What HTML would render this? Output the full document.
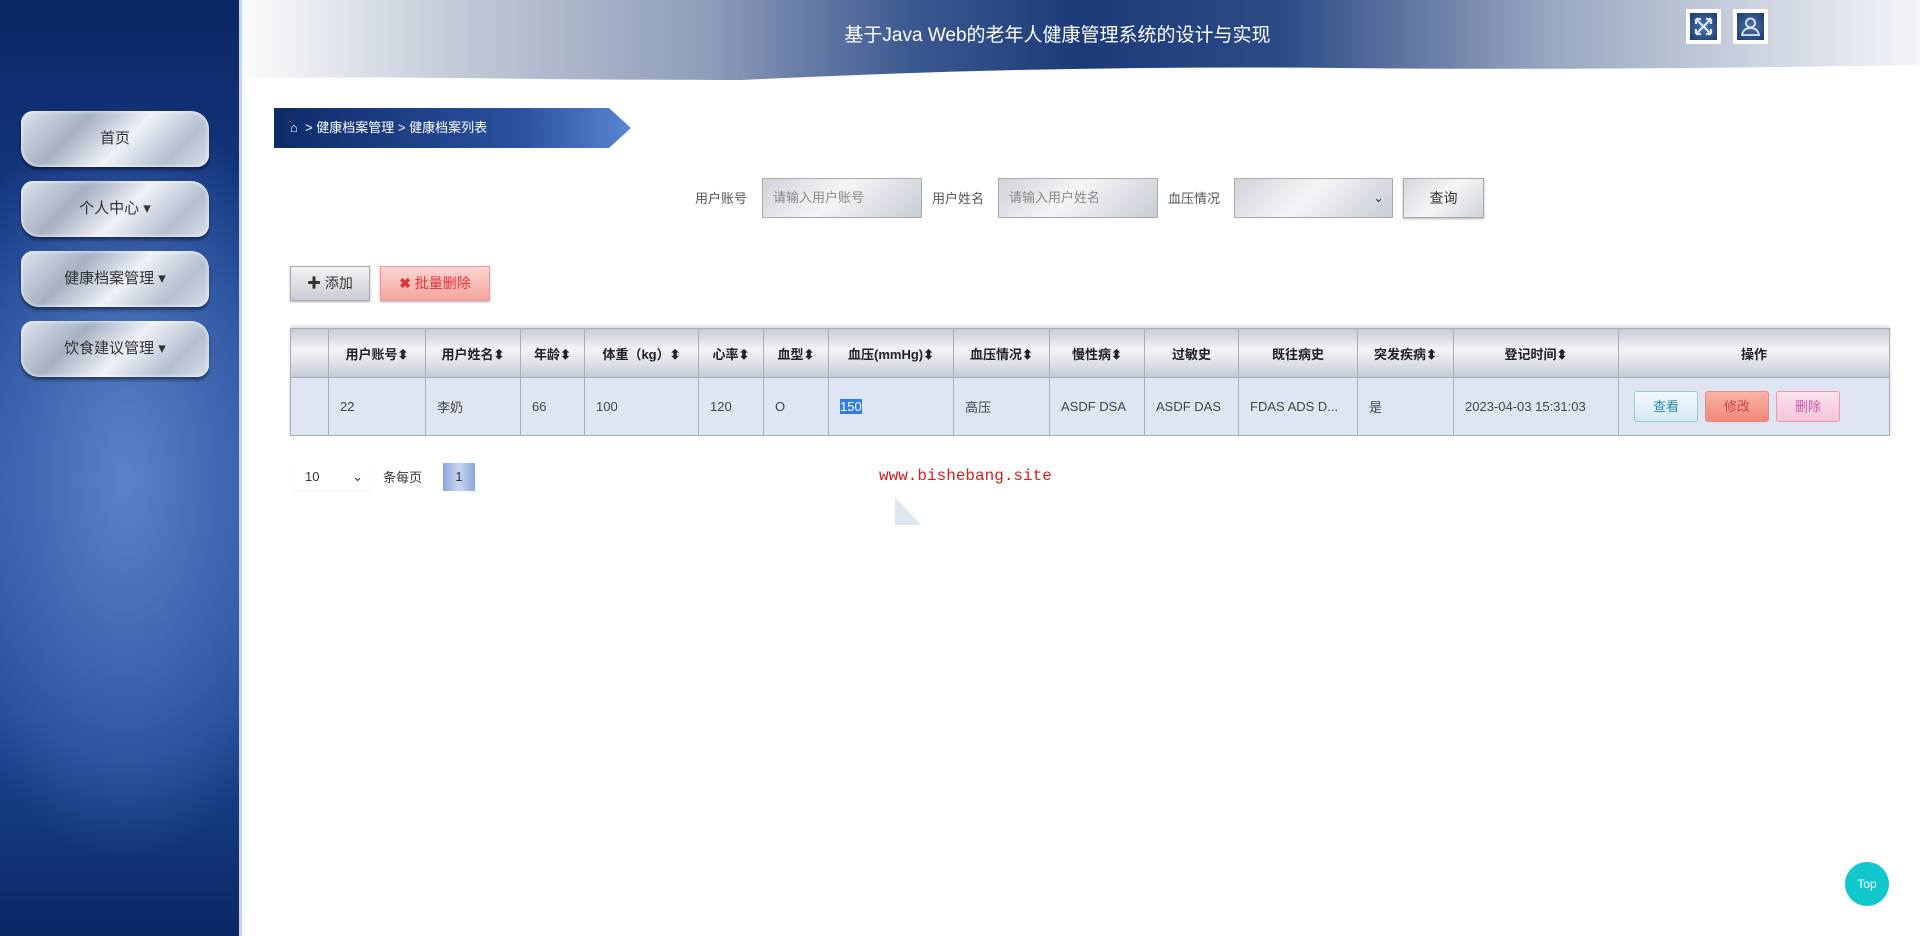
<!DOCTYPE html>
<html><head><meta charset="utf-8"><style>
*{box-sizing:border-box;margin:0;padding:0}
body{width:1920px;height:936px;overflow:hidden;background:#fff;font-family:"Liberation Sans","Noto Sans CJK SC",sans-serif;position:relative;font-size:14px;color:#333}
.side{position:absolute;left:0;top:0;width:242px;height:936px;background:radial-gradient(ellipse 200px 380px at 125px 480px,#5b82c9 0%,#4169b2 45%,rgba(40,80,160,0) 100%),linear-gradient(#0c2664 0%,#163c88 28%,#2f5aa8 52%,#1d4590 78%,#0a2766 100%);border-right:3px solid #c8d4ee}
.nav{position:absolute;left:21px;width:188px;height:56px;border-radius:12px 18px 12px 18px;background:linear-gradient(135deg,#dde3ec 0%,#a7b1c3 30%,#eef1f6 55%,#b4bfd0 80%,#d8dfe9 100%);box-shadow:0 3px 3px rgba(0,0,0,.45),inset 0 0 4px #fff;text-align:center;line-height:56px;font-size:15px;color:#333}
.hdr{position:absolute;left:242px;top:0;width:1678px;height:85px}
.title{position:absolute;left:0;width:1920px;top:20px;text-align:center;padding-left:195px;color:#fff;font-size:19px}
.ic{position:absolute;top:9px;width:35px;height:35px;background:#fff;padding:4px}
.ic div{width:100%;height:100%;background:radial-gradient(#4a73ad,#1b3a6e)}
.ic svg{display:block}
.bc{position:absolute;left:274px;top:108px;height:40px;width:357px;background:linear-gradient(90deg,#0e2b68,#2a52a0 70%,#5a86d0);clip-path:polygon(0 0,335px 0,100% 50%,335px 100%,0 100%);color:#fff;font-size:13px;line-height:40px;padding-left:16px}
.lbl{position:absolute;top:188px;font-size:13px;color:#555}
.inp{position:absolute;top:178px;height:40px;border:1px solid #aaa;background:linear-gradient(135deg,#d0d3da,#f4f5f8 45%,#c8ccd4);font-size:13px;color:#888;line-height:38px;padding-left:10px}
.btn{position:absolute;border:1px solid #aaa;text-align:center;font-size:14px;box-shadow:0 1px 2px rgba(0,0,0,.3)}
table{position:absolute;left:290px;top:328px;border-collapse:collapse;table-layout:fixed;width:1599px;box-shadow:0 -2px 3px rgba(0,0,0,.15)}
td,th{border:1px solid #a8aeb8;font-size:13px;white-space:nowrap;overflow:hidden}
th{height:49px;background:linear-gradient(#c7ccd6,#f2f3f6 40%,#dfe2e8 70%,#c4c9d3);font-weight:bold;color:#222}
td{height:58px;background:#dfe5f2;padding-left:11px;color:#444}
.ob{display:inline-block;width:64px;height:31px;line-height:29px;text-align:center;border-radius:3px;margin-right:7px;font-size:13px}
</style></head><body>
<div class="side">
<div class="nav" style="top:111px">首页</div>
<div class="nav" style="top:181px">个人中心 ▾</div>
<div class="nav" style="top:251px">健康档案管理 ▾</div>
<div class="nav" style="top:321px">饮食建议管理 ▾</div>
</div>
<svg class="hdr" width="1678" height="85" viewBox="0 0 1678 85"><defs><linearGradient id="g" x1="0" x2="1"><stop offset="0" stop-color="#fbfcfd"/><stop offset=".12" stop-color="#c6cdd9"/><stop offset=".28" stop-color="#8e9cb9"/><stop offset=".4" stop-color="#3a5890"/><stop offset=".5" stop-color="#1c3a78"/><stop offset=".62" stop-color="#2c4b86"/><stop offset=".78" stop-color="#9aa7c1"/><stop offset="1" stop-color="#f4f6f9"/></linearGradient></defs><path d="M0 0H1678V65C1500 68 1300 70 1100 68C900 66 700 70 500 80C300 80 150 76 0 78Z" fill="url(#g)"/></svg>
<div class="title">基于Java Web的老年人健康管理系统的设计与实现</div>
<div class="ic" style="left:1686px"><div><svg width="27" height="27" viewBox="0 0 27 27" fill="none" stroke="#dfe8f5" stroke-width="2.2"><path d="M6 6L21 21M21 6L6 21M6 6h5M6 6v5M21 6h-5M21 6v5M6 21h5M6 21v-5M21 21h-5M21 21v-5"/></svg></div></div>
<div class="ic" style="left:1733px"><div><svg width="27" height="27" viewBox="0 0 27 27" fill="none" stroke="#dfe8f5" stroke-width="1.8"><circle cx="13.5" cy="10" r="4.5"/><path d="M5 22c1-5 4-7 8.5-7s7.5 2 8.5 7z"/></svg></div></div>
<div class="bc">⌂ &nbsp;&gt; 健康档案管理 &gt; 健康档案列表</div>
<div class="lbl" style="left:695px">用户账号</div>
<div class="inp" style="left:762px;width:160px">请输入用户账号</div>
<div class="lbl" style="left:932px">用户姓名</div>
<div class="inp" style="left:998px;width:160px">请输入用户姓名</div>
<div class="lbl" style="left:1168px">血压情况</div>
<div class="inp" style="left:1234px;width:159px;text-align:right;padding-right:8px;color:#333">⌄</div>
<div class="btn" style="left:1403px;top:178px;width:81px;height:40px;line-height:38px;background:linear-gradient(135deg,#d5d8de,#f5f6f8 50%,#cfd3da)">查询</div>
<div class="btn" style="left:290px;top:266px;width:80px;height:35px;line-height:33px;background:linear-gradient(#f2f3f5,#c9cdd4)"><b>✚</b> 添加</div>
<div class="btn" style="left:380px;top:266px;width:110px;height:35px;line-height:33px;background:linear-gradient(#fcd6d2,#f3a59e);color:#d33;border-color:#e99"><b>✖</b> 批量删除</div>
<table><colgroup><col style="width:38px"><col style="width:97px"><col style="width:95px"><col style="width:64px"><col style="width:114px"><col style="width:65px"><col style="width:65px"><col style="width:125px"><col style="width:96px"><col style="width:95px"><col style="width:94px"><col style="width:119px"><col style="width:96px"><col style="width:165px"><col style="width:271px"></colgroup>
<tr><th></th><th>用户账号⬍</th><th>用户姓名⬍</th><th>年龄⬍</th><th>体重（kg）⬍</th><th>心率⬍</th><th>血型⬍</th><th>血压(mmHg)⬍</th><th>血压情况⬍</th><th>慢性病⬍</th><th>过敏史</th><th>既往病史</th><th>突发疾病⬍</th><th>登记时间⬍</th><th>操作</th></tr>
<tr><td></td><td>22</td><td>李奶</td><td>66</td><td>100</td><td>120</td><td>O</td><td><span style="background:#2f7fe0;color:#fff">150</span></td><td>高压</td><td>ASDF DSA</td><td>ASDF DAS</td><td>FDAS ADS D...</td><td>是</td><td>2023-04-03 15:31:03</td><td style="padding-left:15px"><span class="ob" style="background:linear-gradient(#f4f9fc,#d6eaf4);border:1px solid #9cc;color:#2a8aa8">查看</span><span class="ob" style="background:linear-gradient(#f9b3a8,#f08878);border:1px solid #e88;color:#c44">修改</span><span class="ob" style="background:linear-gradient(#fbe4ee,#f4c4d8);border:1px solid #e9a;color:#c5a">删除</span></td></tr>
</table>
<div style="position:absolute;left:291px;top:463px;width:80px;height:27px;font-size:13px;line-height:27px;padding-left:14px;box-shadow:0 1px 2px #eee">10 <span style="position:absolute;right:8px">⌄</span></div>
<div style="position:absolute;left:383px;top:467px;font-size:13px">条每页</div>
<div style="position:absolute;left:443px;top:463px;width:32px;height:28px;background:linear-gradient(90deg,#8aa6dc,#c9d6f0,#8aa6dc);text-align:center;line-height:28px;font-size:13px">1</div>
<div style="position:absolute;left:879px;top:467px;font-family:'Liberation Mono',monospace;font-size:16px;color:#d42020">www.bishebang.site</div>
<div style="position:absolute;left:895px;top:497px;width:26px;height:28px;background:#dfe6f0;clip-path:polygon(0 0,100% 100%,0 100%)"></div>
<div style="position:absolute;left:1845px;top:862px;width:44px;height:44px;border-radius:50%;background:#10c8cc;color:#fff;font-size:12px;text-align:center;line-height:44px">Top</div>
</body></html>
